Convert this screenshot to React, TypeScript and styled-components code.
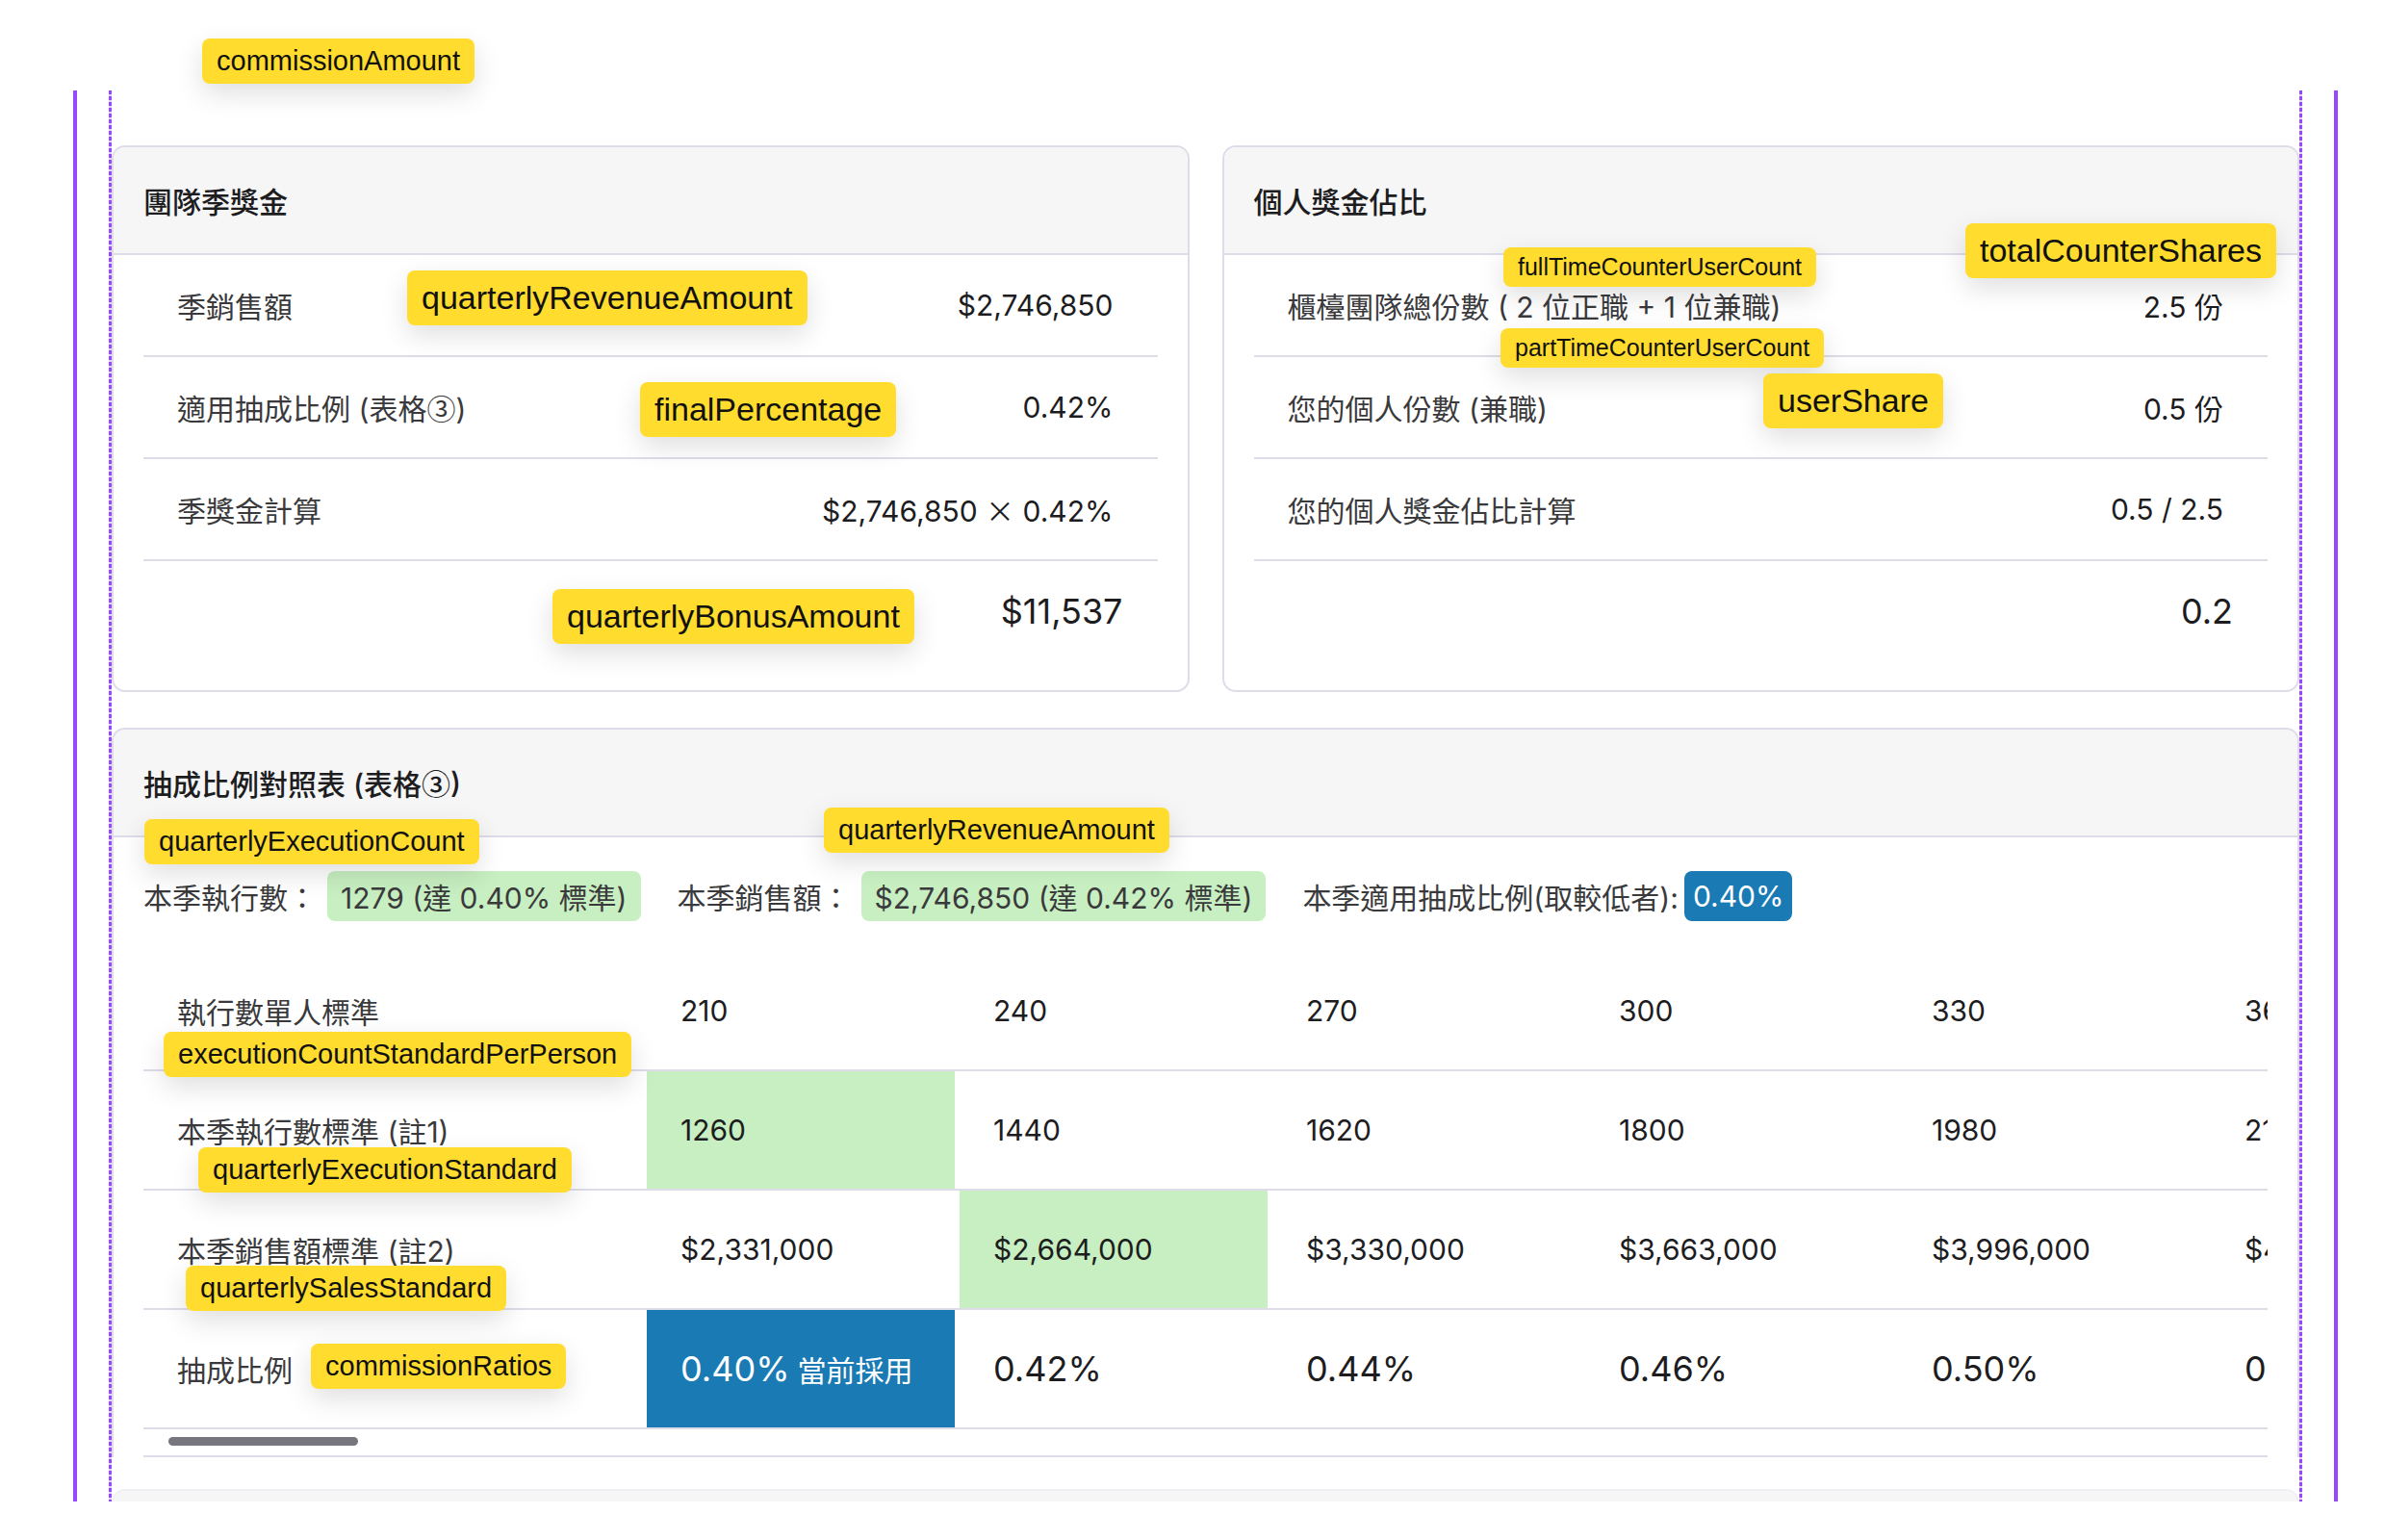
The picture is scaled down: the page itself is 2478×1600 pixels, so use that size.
import React from 'react'
import styled, { createGlobalStyle, css } from 'styled-components'

const PURPLE = '#9747ff'
const LINE = '#dedce9'
const HEAD_BG = '#f6f6f7'

const GlobalStyle = createGlobalStyle`
  html, body { margin: 0; padding: 0; background: #fff; }
  body {
    font-family: Inter, "Noto Sans CJK TC", "Noto Sans", sans-serif;
    color: #1d1d1f;
  }
  * { box-sizing: border-box; }
`

const Page = styled.div`
  position: relative;
  width: 2478px;
  height: 1600px;
  padding-top: 94px;
`

const Frame = styled.div`
  margin-left: 76px;
  width: 2353px;
  height: 1466px;
  border-left: 4px solid ${PURPLE};
  border-right: 4px solid ${PURPLE};
  padding: 0 33px;
  overflow: hidden;
`

const Guide = styled.div`
  height: 100%;
  padding: 57px 3px 0;
  display: flex;
  flex-direction: column;
  gap: 37px;
  background:
    repeating-linear-gradient(to bottom, ${PURPLE} 0 4px, #e2d4ff 4px 6px) left top / 3px 100% no-repeat,
    repeating-linear-gradient(to bottom, ${PURPLE} 0 4px, #e2d4ff 4px 6px) right top / 3px 100% no-repeat;
`

const CardGrid = styled.div`
  display: grid;
  grid-template-columns: 1fr 1fr;
  gap: 34px;
`

const Card = styled.section<{ $open?: boolean; $tail?: boolean }>`
  background: #fff;
  border: 2px solid ${LINE};
  border-radius: 14px;
  overflow: hidden;
  flex-shrink: 0;
  ${(p) =>
    p.$open &&
    css`
      border-bottom: none;
      border-radius: 14px 14px 0 0;
    `}
  ${(p) =>
    p.$tail &&
    css`
      margin-top: -4px;
      border-color: #f0eff4;
    `}
`

const CardHeader = styled.header`
  height: 112px;
  padding: 0 31px;
  display: flex;
  align-items: center;
  background: ${HEAD_BG};
  border-bottom: 2px solid ${LINE};
  font-size: 30px;
  font-weight: 500;
  color: #1d1d1f;
`

const CardBody = styled.div`
  padding: 0 31px 30px;
`

const InfoRow = styled.div<{ $total?: boolean }>`
  height: 106px;
  display: flex;
  align-items: center;
  justify-content: space-between;
  padding: 0 ${(p) => (p.$total ? '36px' : '46px')} 0 35px;
  border-bottom: 2px solid ${LINE};
  &:last-child {
    border-bottom: none;
    height: 104px;
  }
`

const Label = styled.span`
  font-size: 30px;
  color: #3a3a3c;
`

const Value = styled.span<{ $big?: boolean }>`
  font-size: ${(p) => (p.$big ? '36px' : '30px')};
  color: #1d1d1f;
`

/* circled digits and the times sign come from the CJK face, as in the original */
const Sym = styled.span`
  font-family: "Noto Sans CJK TC", sans-serif;
`

const TableBody = styled.div`
  padding: 35px 31px 0;
`

const Stats = styled.div`
  height: 52px;
  display: flex;
  align-items: center;
  gap: 38px;
  font-size: 30px;
  color: #3a3a3c;
`

const StatGroup = styled.div<{ $tight?: boolean }>`
  display: flex;
  align-items: center;
  gap: ${(p) => (p.$tight ? '6px' : '11px')};
`

const Pill = styled.span<{ $tone: 'green' | 'blue' }>`
  height: 52px;
  display: inline-flex;
  align-items: center;
  padding: 0 14px;
  border-radius: 8px;
  font-size: 30px;
  ${(p) =>
    p.$tone === 'green'
      ? css`
          background: #c7efc1;
          color: #3a3a3c;
        `
      : css`
          background: #1a7ab4;
          color: #fff;
          padding: 0 9px;
        `}
`

const TableArea = styled.div`
  margin-top: 32px;
  border-bottom: 2px solid ${LINE};
`

const TableClip = styled.div`
  overflow: hidden;
`

const Table = styled.table`
  border-collapse: separate;
  border-spacing: 0;
  table-layout: fixed;
  width: 3448px;
`

const Cell = styled.td<{ $first?: boolean; $fill?: 'green' | 'blue'; $big?: boolean }>`
  width: ${(p) => (p.$first ? '523px' : '325px')};
  height: 124px;
  padding: 0 0 0 35px;
  border-bottom: 2px solid ${LINE};
  white-space: nowrap;
  overflow: hidden;
  vertical-align: middle;
  font-size: ${(p) => (p.$big ? '36px' : '30px')};
  color: ${(p) => (p.$first ? '#3a3a3c' : '#1d1d1f')};
  font-weight: 400;
  text-align: left;
  ${(p) =>
    p.$fill === 'green' &&
    css`
      background: linear-gradient(to right, #c7efc1 calc(100% - 5px), transparent calc(100% - 5px));
    `}
  ${(p) =>
    p.$fill === 'blue' &&
    css`
      background: linear-gradient(to right, #1a7ab4 calc(100% - 5px), transparent calc(100% - 5px));
      color: #fff;
    `}
`

const CellNote = styled.span`
  font-size: 30px;
  margin-left: 8px;
`

const ScrollTrack = styled.div`
  height: 27px;
  padding: 8px 0 0 26px;
`

const ScrollThumb = styled.div`
  width: 197px;
  height: 9px;
  border-radius: 5px;
  background: #77767f;
`

const Tag = styled.span<{ $x: number; $y: number; $size: 's' | 'm' | 'l' }>`
  position: absolute;
  left: ${(p) => p.$x}px;
  top: ${(p) => p.$y}px;
  z-index: 5;
  background: #ffdc2e;
  color: #111;
  font-family: "Liberation Sans", Arial, sans-serif;
  white-space: nowrap;
  border-radius: 8px;
  box-shadow: 0 10px 28px rgba(0, 0, 0, 0.13);
  ${(p) =>
    p.$size === 's'
      ? css`
          font-size: 25px;
          line-height: 29px;
          padding: 6px 15px;
        `
      : p.$size === 'm'
      ? css`
          font-size: 29px;
          line-height: 33px;
          padding: 7px 15px;
        `
      : css`
          font-size: 34px;
          line-height: 39px;
          padding: 9px 15px;
        `}
`

const tags: { text: string; x: number; y: number; size: 's' | 'm' | 'l' }[] = [
  { text: 'commissionAmount', x: 210, y: 40, size: 'm' },
  { text: 'quarterlyRevenueAmount', x: 423, y: 281, size: 'l' },
  { text: 'finalPercentage', x: 665, y: 397, size: 'l' },
  { text: 'quarterlyBonusAmount', x: 574, y: 612, size: 'l' },
  { text: 'fullTimeCounterUserCount', x: 1562, y: 257, size: 's' },
  { text: 'totalCounterShares', x: 2042, y: 232, size: 'l' },
  { text: 'partTimeCounterUserCount', x: 1559, y: 341, size: 's' },
  { text: 'userShare', x: 1832, y: 388, size: 'l' },
  { text: 'quarterlyExecutionCount', x: 150, y: 851, size: 'm' },
  { text: 'quarterlyRevenueAmount', x: 856, y: 839, size: 'm' },
  { text: 'executionCountStandardPerPerson', x: 170, y: 1072, size: 'm' },
  { text: 'quarterlyExecutionStandard', x: 206, y: 1192, size: 'm' },
  { text: 'quarterlySalesStandard', x: 193, y: 1315, size: 'm' },
  { text: 'commissionRatios', x: 323, y: 1396, size: 'm' },
]

const perPerson = [210, 240, 270, 300, 330, 360, 390, 420, 450]
const execStandard = [1260, 1440, 1620, 1800, 1980, 2160, 2340, 2520, 2700]
const salesStandard = [
  '$2,331,000',
  '$2,664,000',
  '$3,330,000',
  '$3,663,000',
  '$3,996,000',
  '$4,329,000',
  '$4,662,000',
  '$4,995,000',
  '$5,328,000',
]
const ratios = ['0.42%', '0.44%', '0.46%', '0.50%', '0.55%', '0.60%', '0.65%', '0.70%']

export default function App() {
  return (
    <Page>
      <GlobalStyle />
      <Frame>
        <Guide>
          <CardGrid>
            <Card>
              <CardHeader>團隊季獎金</CardHeader>
              <CardBody>
                <InfoRow>
                  <Label>季銷售額</Label>
                  <Value>$2,746,850</Value>
                </InfoRow>
                <InfoRow>
                  <Label>
                    適用抽成比例 (表格<Sym>③</Sym>)
                  </Label>
                  <Value>0.42%</Value>
                </InfoRow>
                <InfoRow>
                  <Label>季獎金計算</Label>
                  <Value>
                    $2,746,850 <Sym>×</Sym> 0.42%
                  </Value>
                </InfoRow>
                <InfoRow $total>
                  <Label />
                  <Value $big>$11,537</Value>
                </InfoRow>
              </CardBody>
            </Card>
            <Card>
              <CardHeader>個人獎金佔比</CardHeader>
              <CardBody>
                <InfoRow>
                  <Label>櫃檯團隊總份數 ( 2 位正職 + 1 位兼職)</Label>
                  <Value>2.5 份</Value>
                </InfoRow>
                <InfoRow>
                  <Label>您的個人份數 (兼職)</Label>
                  <Value>0.5 份</Value>
                </InfoRow>
                <InfoRow>
                  <Label>您的個人獎金佔比計算</Label>
                  <Value>0.5 / 2.5</Value>
                </InfoRow>
                <InfoRow $total>
                  <Label />
                  <Value $big>0.2</Value>
                </InfoRow>
              </CardBody>
            </Card>
          </CardGrid>

          <Card $open>
            <CardHeader>
              抽成比例對照表 (表格<Sym>③</Sym>)
            </CardHeader>
            <TableBody>
              <Stats>
                <StatGroup>
                  本季執行數：<Pill $tone="green">1279 (達 0.40% 標準)</Pill>
                </StatGroup>
                <StatGroup>
                  本季銷售額：<Pill $tone="green">$2,746,850 (達 0.42% 標準)</Pill>
                </StatGroup>
                <StatGroup $tight>
                  本季適用抽成比例(取較低者):<Pill $tone="blue">0.40%</Pill>
                </StatGroup>
              </Stats>
              <TableArea>
                <TableClip>
                  <Table>
                    <tbody>
                      <tr>
                        <Cell $first>執行數單人標準</Cell>
                        {perPerson.map((v) => (
                          <Cell key={v}>{v}</Cell>
                        ))}
                      </tr>
                      <tr>
                        <Cell $first>本季執行數標準 (註1)</Cell>
                        {execStandard.map((v, i) => (
                          <Cell key={v} $fill={i === 0 ? 'green' : undefined}>
                            {v}
                          </Cell>
                        ))}
                      </tr>
                      <tr>
                        <Cell $first>本季銷售額標準 (註2)</Cell>
                        {salesStandard.map((v, i) => (
                          <Cell key={v} $fill={i === 1 ? 'green' : undefined}>
                            {v}
                          </Cell>
                        ))}
                      </tr>
                      <tr>
                        <Cell $first>抽成比例</Cell>
                        <Cell $fill="blue" $big>
                          0.40%<CellNote>當前採用</CellNote>
                        </Cell>
                        {ratios.map((v) => (
                          <Cell key={v} $big>
                            {v}
                          </Cell>
                        ))}
                      </tr>
                    </tbody>
                  </Table>
                </TableClip>
                <ScrollTrack>
                  <ScrollThumb />
                </ScrollTrack>
              </TableArea>
            </TableBody>
          </Card>

          <Card $tail>
            <CardHeader />
          </Card>
        </Guide>
      </Frame>

      {tags.map((t) => (
        <Tag key={t.text + t.y} $x={t.x} $y={t.y} $size={t.size}>
          {t.text}
        </Tag>
      ))}
    </Page>
  )
}
